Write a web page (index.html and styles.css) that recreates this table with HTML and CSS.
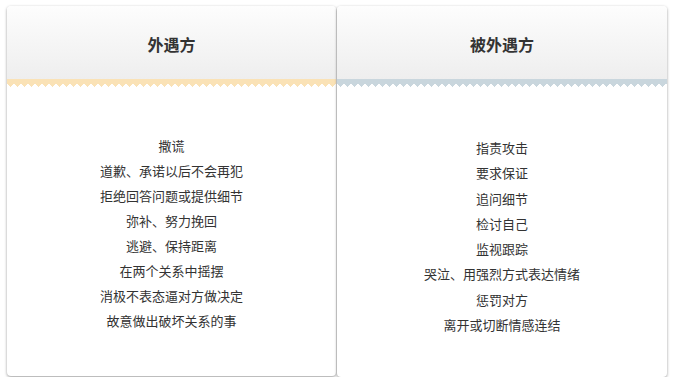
FILE: index.html
```html
<!DOCTYPE html>
<html lang="zh-CN">
<head>
<meta charset="utf-8">
<title>外遇方 / 被外遇方</title>
<link rel="stylesheet" href="styles.css">
</head>
<body>
<div class="board">
  <section class="card card-left">
    <header class="card-head"><h2 class="card-title">外遇方</h2></header>
    <div class="zigzag zigzag-yellow"></div>
    <ul class="items items-left">
      <li>撒谎</li>
      <li>道歉、承诺以后不会再犯</li>
      <li>拒绝回答问题或提供细节</li>
      <li>弥补、努力挽回</li>
      <li>逃避、保持距离</li>
      <li>在两个关系中摇摆</li>
      <li>消极不表态逼对方做决定</li>
      <li>故意做出破坏关系的事</li>
    </ul>
  </section>
  <section class="card card-right">
    <header class="card-head"><h2 class="card-title">被外遇方</h2></header>
    <div class="zigzag zigzag-blue"></div>
    <ul class="items items-right">
      <li>指责攻击</li>
      <li>要求保证</li>
      <li>追问细节</li>
      <li>检讨自己</li>
      <li>监视跟踪</li>
      <li>哭泣、用强烈方式表达情绪</li>
      <li>惩罚对方</li>
      <li>离开或切断情感连结</li>
    </ul>
  </section>
</div>
</body>
</html>
```
FILE: styles.css
```css
html, body {
  margin: 0;
  padding: 0;
  background: #ffffff;
}
body {
  font-family: "Noto Sans CJK SC", "Noto Sans", sans-serif;
  color: #333333;
}
.board {
  display: flex;
  align-items: flex-start;
  gap: 1px;
  padding: 6px 7px 0 7px;
}
.card {
  background: #ffffff;
  border-radius: 4px;
  box-shadow: 0 1px 3px rgba(0, 0, 0, 0.4);
  overflow: hidden;
}
.card-left {
  width: 329px;
  height: 370px;
}
.card-right {
  width: 330px;
  height: 371px;
}
.card-head {
  height: 73px;
  background: linear-gradient(#fdfdfd, #eeeeee);
  display: flex;
  align-items: center;
  justify-content: center;
}
.card-title {
  margin: 0;
  font-size: 16px;
  font-weight: 700;
  color: #333333;
  line-height: 1;
  padding-top: 3px;
}
.zigzag {
  height: 8px;
  background-repeat: no-repeat, repeat-x;
  background-size: 100% 4px, 7px 4px;
  background-position: 0 0, 0 4px;
}
.zigzag-yellow {
  background-image:
    linear-gradient(#fae2b6, #fae2b6),
    conic-gradient(from -41deg at 50% 100%, #fae2b6 0 82deg, transparent 0);
}
.zigzag-blue {
  background-image:
    linear-gradient(#c9d6dd, #c9d6dd),
    conic-gradient(from -41deg at 50% 100%, #c9d6dd 0 82deg, transparent 0);
}
.items {
  list-style: none;
  margin: 0;
  padding: 0;
  text-align: center;
  font-size: 13px;
  line-height: 25px;
  color: #333333;
}
.items-left {
  padding-top: 46px;
}
.items-right {
  padding-top: 48px;
  line-height: 25.3px;
}
```
